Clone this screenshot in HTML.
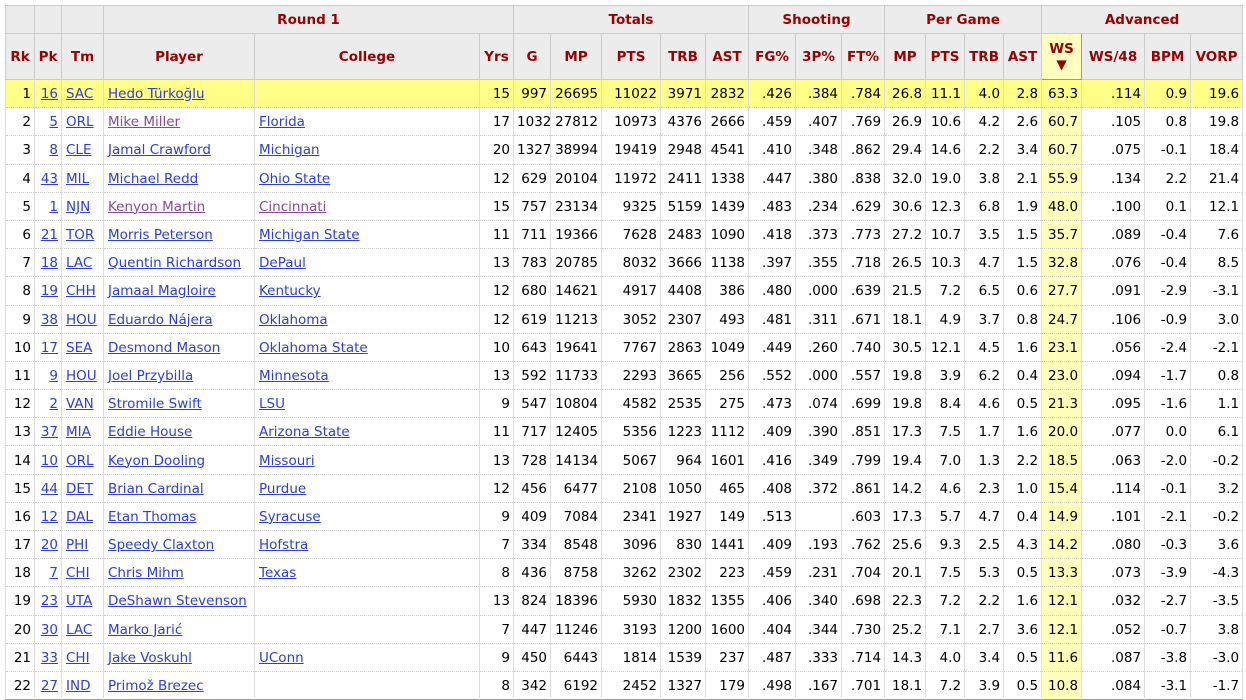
<!DOCTYPE html><html><head><meta charset="utf-8"><style>
body{margin:0;background:#fff;font-family:"DejaVu Sans",Verdana,sans-serif;font-size:13.5px;color:#000}
table{position:absolute;left:5px;top:5px;border-collapse:collapse;table-layout:fixed;width:1237px}
td,th{padding:0 3px;white-space:nowrap;overflow:hidden;border-left:1px solid #ddd;border-right:1px solid #ddd}
th{background:#ececec;color:#900;font-weight:bold;border:1px solid #ccc;font-size:13.5px;padding:0 2px}
thead tr.a th{height:27px}
thead tr.b th{height:45px}
tbody td{height:28.2px;border-bottom:1px dotted #ccc;text-align:right;padding-top:1px;box-sizing:border-box}
tbody td.l{text-align:left;padding-left:4px}
tbody tr.hl td{background:#ffff88}
td.ws{background:#ffffbb}
tbody tr.hl td.ws{background:#ffff88}
th.ws{background:#ffffc0;border:1px solid #999}
a{color:#2d3fd4;text-decoration:underline}
a.v{color:#884a9a}
table{border:1px solid #999}
</style></head><body>
<table>
<colgroup><col style="width:29px"><col style="width:27px"><col style="width:42px"><col style="width:151px"><col style="width:225px"><col style="width:34px"><col style="width:37px"><col style="width:51px"><col style="width:59px"><col style="width:45px"><col style="width:43px"><col style="width:47px"><col style="width:46px"><col style="width:43px"><col style="width:41px"><col style="width:39px"><col style="width:39px"><col style="width:38px"><col style="width:40px"><col style="width:63px"><col style="width:46px"><col style="width:52px"></colgroup>
<thead>
<tr class="a"><th></th><th></th><th></th><th colspan="3">Round 1</th><th colspan="5">Totals</th><th colspan="3">Shooting</th><th colspan="4">Per Game</th><th colspan="4">Advanced</th></tr>
<tr class="b"><th>Rk</th><th>Pk</th><th>Tm</th><th>Player</th><th>College</th><th>Yrs</th><th>G</th><th>MP</th><th>PTS</th><th>TRB</th><th>AST</th><th>FG%</th><th>3P%</th><th>FT%</th><th>MP</th><th>PTS</th><th>TRB</th><th>AST</th><th class="ws">WS<br>▼</th><th>WS/48</th><th>BPM</th><th>VORP</th></tr>
</thead>
<tbody id="tb"></tbody></table>
<script>
var d=[
[1,16,"SAC","Hedo Türkoğlu","",15,997,26695,11022,3971,2832,".426",".384",".784","26.8","11.1","4.0","2.8","63.3",".114","0.9","19.6"],
[2,5,"ORL","Mike Miller","Florida",17,1032,27812,10973,4376,2666,".459",".407",".769","26.9","10.6","4.2","2.6","60.7",".105","0.8","19.8"],
[3,8,"CLE","Jamal Crawford","Michigan",20,1327,38994,19419,2948,4541,".410",".348",".862","29.4","14.6","2.2","3.4","60.7",".075","-0.1","18.4"],
[4,43,"MIL","Michael Redd","Ohio State",12,629,20104,11972,2411,1338,".447",".380",".838","32.0","19.0","3.8","2.1","55.9",".134","2.2","21.4"],
[5,1,"NJN","Kenyon Martin","Cincinnati",15,757,23134,9325,5159,1439,".483",".234",".629","30.6","12.3","6.8","1.9","48.0",".100","0.1","12.1"],
[6,21,"TOR","Morris Peterson","Michigan State",11,711,19366,7628,2483,1090,".418",".373",".773","27.2","10.7","3.5","1.5","35.7",".089","-0.4","7.6"],
[7,18,"LAC","Quentin Richardson","DePaul",13,783,20785,8032,3666,1138,".397",".355",".718","26.5","10.3","4.7","1.5","32.8",".076","-0.4","8.5"],
[8,19,"CHH","Jamaal Magloire","Kentucky",12,680,14621,4917,4408,386,".480",".000",".639","21.5","7.2","6.5","0.6","27.7",".091","-2.9","-3.1"],
[9,38,"HOU","Eduardo Nájera","Oklahoma",12,619,11213,3052,2307,493,".481",".311",".671","18.1","4.9","3.7","0.8","24.7",".106","-0.9","3.0"],
[10,17,"SEA","Desmond Mason","Oklahoma State",10,643,19641,7767,2863,1049,".449",".260",".740","30.5","12.1","4.5","1.6","23.1",".056","-2.4","-2.1"],
[11,9,"HOU","Joel Przybilla","Minnesota",13,592,11733,2293,3665,256,".552",".000",".557","19.8","3.9","6.2","0.4","23.0",".094","-1.7","0.8"],
[12,2,"VAN","Stromile Swift","LSU",9,547,10804,4582,2535,275,".473",".074",".699","19.8","8.4","4.6","0.5","21.3",".095","-1.6","1.1"],
[13,37,"MIA","Eddie House","Arizona State",11,717,12405,5356,1223,1112,".409",".390",".851","17.3","7.5","1.7","1.6","20.0",".077","0.0","6.1"],
[14,10,"ORL","Keyon Dooling","Missouri",13,728,14134,5067,964,1601,".416",".349",".799","19.4","7.0","1.3","2.2","18.5",".063","-2.0","-0.2"],
[15,44,"DET","Brian Cardinal","Purdue",12,456,6477,2108,1050,465,".408",".372",".861","14.2","4.6","2.3","1.0","15.4",".114","-0.1","3.2"],
[16,12,"DAL","Etan Thomas","Syracuse",9,409,7084,2341,1927,149,".513","",".603","17.3","5.7","4.7","0.4","14.9",".101","-2.1","-0.2"],
[17,20,"PHI","Speedy Claxton","Hofstra",7,334,8548,3096,830,1441,".409",".193",".762","25.6","9.3","2.5","4.3","14.2",".080","-0.3","3.6"],
[18,7,"CHI","Chris Mihm","Texas",8,436,8758,3262,2302,223,".459",".231",".704","20.1","7.5","5.3","0.5","13.3",".073","-3.9","-4.3"],
[19,23,"UTA","DeShawn Stevenson","",13,824,18396,5930,1832,1355,".406",".340",".698","22.3","7.2","2.2","1.6","12.1",".032","-2.7","-3.5"],
[20,30,"LAC","Marko Jarić","",7,447,11246,3193,1200,1600,".404",".344",".730","25.2","7.1","2.7","3.6","12.1",".052","-0.7","3.8"],
[21,33,"CHI","Jake Voskuhl","UConn",9,450,6443,1814,1539,237,".487",".333",".714","14.3","4.0","3.4","0.5","11.6",".087","-3.8","-3.0"],
[22,27,"IND","Primož Brezec","",8,342,6192,2452,1327,179,".498",".167",".701","18.1","7.2","3.9","0.5","10.8",".084","-3.1","-1.7"]];
var h="";d.forEach(function(r){h+='<tr'+(r[0]==1?' class="hl"':'')+'>';
r.forEach(function(c,i){var v=(r[0]==2&&i==3)||(r[0]==5&&(i==3||i==4));
if(i==1)h+='<td><a>'+c+'</a></td>';
else if(i==2)h+='<td class="l"><a>'+c+'</a></td>';
else if(i==3||i==4)h+='<td class="l">'+(c?'<a'+(v?' class="v"':'')+'>'+c+'</a>':'')+'</td>';
else h+='<td'+(i==18?' class="ws"':'')+'>'+c+'</td>';});h+='</tr>';});
document.getElementById("tb").innerHTML=h;
</script>
</body></html>
